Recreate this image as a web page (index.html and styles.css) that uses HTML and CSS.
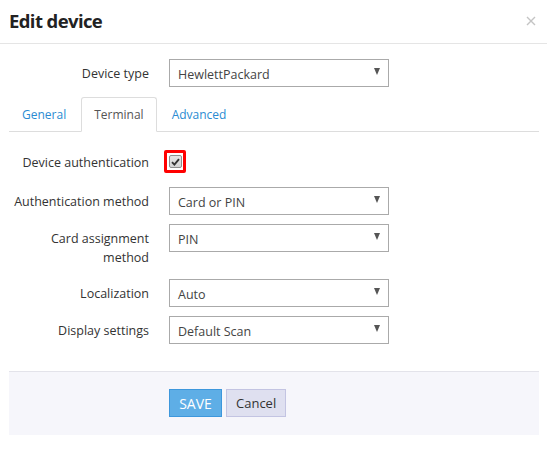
FILE: index.html
```html
<!DOCTYPE html>
<html>
<head>
<meta charset="utf-8">
<link rel="stylesheet" href="styles.css">
</head>
<body>
<div class="modal">
  <div class="modal-header">
    <h1 class="title">Edit device</h1>
    <button class="close" aria-label="Close">
      <svg width="10" height="10" viewBox="0 0 10 10"><path d="M1 1L9 9M9 1L1 9" stroke="#c4c4c4" stroke-width="1.4" fill="none"/></svg>
    </button>
  </div>
  <div class="modal-body">
    <div class="form-row first">
      <label class="lbl">Device type</label>
      <div class="select"><span>HewlettPackard</span><i class="caret"></i></div>
    </div>
    <ul class="tabs">
      <li class="tab"><a>General</a></li>
      <li class="tab active"><a>Terminal</a></li>
      <li class="tab"><a>Advanced</a></li>
    </ul>
    <div class="tab-content">
      <div class="form-row check-row">
        <label class="lbl">Device authentication</label>
        <div class="check-cell">
          <span class="focus-ring">
            <span class="checkbox">
              <svg width="9" height="8" viewBox="0 0 9 8"><path d="M1 4.2L3.4 6.6L8 1.2" stroke="#333" stroke-width="1.9" fill="none"/></svg>
            </span>
          </span>
        </div>
      </div>
      <div class="form-row">
        <label class="lbl">Authentication method</label>
        <div class="select"><span>Card or PIN</span><i class="caret"></i></div>
      </div>
      <div class="form-row tall">
        <label class="lbl">Card assignment method</label>
        <div class="select"><span>PIN</span><i class="caret"></i></div>
      </div>
      <div class="form-row">
        <label class="lbl">Localization</label>
        <div class="select"><span>Auto</span><i class="caret"></i></div>
      </div>
      <div class="form-row last">
        <label class="lbl">Display settings</label>
        <div class="select"><span>Default Scan</span><i class="caret"></i></div>
      </div>
    </div>
    <div class="modal-footer">
      <button class="btn btn-save">SAVE</button>
      <button class="btn btn-cancel">Cancel</button>
    </div>
  </div>
</div>
</body>
</html>
```
FILE: styles.css
```css
* { box-sizing: border-box; }
html, body { margin: 0; padding: 0; background: #fff; }
body {
  font-family: "Open Sans", "Noto Sans", "Liberation Sans", sans-serif;
  font-size: 12.5px;
  color: #333;
}
.modal { width: 547px; }
.modal-header {
  height: 44px;
  border-bottom: 1px solid #e5e5e5;
  display: flex;
  align-items: center;
  justify-content: space-between;
  padding: 0 9px 0 9px;
}
.title {
  margin: 0;
  font-size: 18.5px;
  font-weight: 700;
  color: #222;
  letter-spacing: -0.6px;
  line-height: 24px;
  padding-bottom: 2px;
}
.close {
  border: 0;
  background: none;
  padding: 0;
  margin: 0 1px 2px 0;
  width: 12px;
  height: 12px;
  display: flex;
  align-items: center;
  justify-content: center;
  cursor: pointer;
}
.modal-body { padding: 15px 8px 0 9px; }
.form-row {
  display: grid;
  grid-template-columns: 140px 220px;
  column-gap: 20px;
  margin-bottom: 9px;
}
.form-row.first { margin-bottom: 10px; }
.form-row.tall { margin-bottom: 12px; }
.form-row.last { margin-bottom: 0; }
.lbl {
  text-align: right;
  padding-top: 6px;
  line-height: 18.5px;
  color: #333;
}
.select {
  height: 28px;
  border: 1px solid #aaa;
  background: #fff;
  display: flex;
  align-items: center;
  justify-content: space-between;
  padding: 2px 8px 0 8px;
  color: #444;
}
.caret {
  width: 0;
  height: 0;
  border-left: 3.5px solid transparent;
  border-right: 3.5px solid transparent;
  border-top: 7px solid #555;
  margin-top: -5px;
}
.tabs {
  list-style: none;
  margin: 0 0 18px 0;
  padding: 0;
  display: flex;
  border-bottom: 1px solid #ddd;
}
.tab {
  margin: 0 2px -1px 0;
  border: 1px solid transparent;
  border-radius: 3px 3px 0 0;
  padding: 7px 12px 7px 12px;
  line-height: 19px;
  font-size: 12px;
}
.tab a { color: #2a8bd2; cursor: pointer; }
.tab.active {
  border-color: #ddd;
  border-bottom-color: #fff;
  background: #fff;
}
.tab.active a { color: #555; }
.check-row { margin-bottom: 14px; }
.check-row .lbl { padding-top: 4px; }
.check-cell { display: flex; align-items: flex-start; }
.focus-ring {
  margin-left: -5px;
  width: 22px;
  height: 23px;
  border: 3px solid #f00;
  border-radius: 2px;
  display: flex;
  align-items: center;
  justify-content: center;
}
.checkbox {
  width: 13px;
  height: 13px;
  border: 1px solid #8e8e8e;
  border-radius: 2px;
  background: linear-gradient(#e6e6e6, #d4d4d4);
  display: flex;
  align-items: center;
  justify-content: center;
}
.modal-footer {
  margin-top: 27px;
  background: #f6f6fb;
  border-top: 1px solid #e3e3ea;
  padding: 17px 0 18px 160px;
  display: flex;
  gap: 4px;
}
.btn {
  height: 28px;
  font-family: inherit;
  font-size: 13px;
  padding: 0 9px;
  cursor: pointer;
}
.btn-save {
  width: 53px;
  background: #5eaee6;
  border: 1px solid #3d97dc;
  color: #fff;
  font-size: 14px;
}
.btn-cancel {
  width: 60px;
  background: #dfe0f0;
  border: 1px solid #c3c4e2;
  color: #333;
}
```
